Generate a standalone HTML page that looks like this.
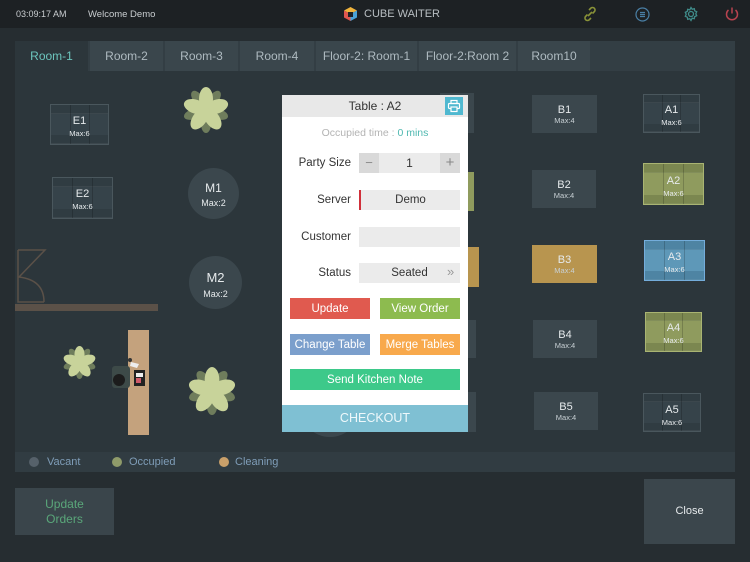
<!DOCTYPE html>
<html><head><meta charset="utf-8"><style>
*{margin:0;padding:0;box-sizing:border-box}
body{width:750px;height:562px;overflow:hidden;background:#262d31;font-family:"Liberation Sans",sans-serif;position:relative;color:#fff}
.a{position:absolute}
.top{left:0;top:0;width:750px;height:28px;background:#1d2124}
.tab{top:41px;height:30px;background:#3a464c;color:#aebac0;font-size:12px;text-align:center;line-height:30px}
.t4{background:#3b474d;color:#e6eaec;text-align:center;font-size:11px}
.t4 b{display:block;font-weight:normal;font-size:11px;margin-top:9px}
.t4 i{display:block;font-style:normal;font-size:7.5px;color:#c8d0d4}
.t6{border:1px solid #4a575d;text-align:center;font-size:11px;color:#e6eaec}
.t6 .s{position:absolute;left:0;right:0;height:22%;border-bottom:1px solid rgba(255,255,255,.06)}
.t6 .c{position:absolute;top:0;bottom:0;width:1px;background:rgba(0,0,0,.18)}
.circ{border-radius:50%;background:#3b474d;text-align:center;color:#e6eaec;font-size:12px}
.lbl{color:#333;font-size:11.5px;text-align:right;width:70px;left:281px}
.fld{background:#ebebeb;left:359px;width:101px;height:20px;color:#333;font-size:11.5px;text-align:center;line-height:21px}
.btn{height:21px;color:#fff;font-size:11.5px;text-align:center;line-height:22px}
</style></head><body>
<div class="a top"></div>
<div class="a" style="left:16px;top:9px;font-size:9px;color:#c9cdd0">03:09:17 AM</div>
<div class="a" style="left:88px;top:9px;font-size:9.5px;color:#c9cdd0">Welcome Demo</div>
<svg class="a" style="left:343px;top:6px" width="15" height="16" viewBox="0 0 15 16"><path d="M7.5 1 L14 4.5 L7.5 8 L1 4.5Z" fill="#f0b43c"/><path d="M1 4.5 L7.5 8 L7.5 15 L1 11.5Z" fill="#e0564f"/><path d="M14 4.5 L7.5 8 L7.5 15 L14 11.5Z" fill="#4aa3d8"/><rect x="5" y="6" width="5" height="5" fill="#1d2124"/></svg>
<div class="a" style="left:364px;top:8px;font-size:11px;color:#b8bec2">CUBE WAITER</div>
<svg class="a" style="left:582px;top:6px" width="16" height="16" viewBox="0 0 16 16" fill="none" stroke="#8a9338" stroke-width="1.6"><path d="M7 4l2-2a2.5 2.5 0 013.5 3.5l-2 2"/><path d="M9 12l-2 2a2.5 2.5 0 01-3.5-3.5l2-2"/><path d="M6 10l4-4"/></svg>
<svg class="a" style="left:635px;top:7px" width="15" height="15" viewBox="0 0 15 15" fill="none" stroke="#4a7fa5" stroke-width="1.2"><circle cx="7.5" cy="7.5" r="6.5"/><path d="M5 5.5h5M5 7.5h5M5 9.5h5"/></svg>
<svg class="a" style="left:683px;top:6px" width="16" height="16" viewBox="0 0 16 16" fill="none" stroke="#3f8c8a" stroke-width="1.3"><circle cx="8" cy="8" r="2.5"/><path d="M8 1.5l1.2 1.8 2.1-.6.4 2.1 2 .9-.9 2 .9 2-2 .9-.4 2.1-2.1-.6L8 14.5l-1.2-1.8-2.1.6-.4-2.1-2-.9.9-2-.9-2 2-.9.4-2.1 2.1.6z"/></svg>
<svg class="a" style="left:724px;top:6px" width="16" height="16" viewBox="0 0 16 16" fill="none" stroke="#b8434f" stroke-width="1.5"><path d="M8 1.5v6"/><path d="M4.5 4a5.5 5.5 0 107 0"/></svg>

<div class="a" style="left:15px;top:41px;width:720px;height:411px;background:#2c363b"></div>
<div class="a" style="left:15px;top:41px;width:720px;height:30px;background:#333e44"></div>
<div class="a tab" style="left:15px;width:73px;background:#2c363b;color:#6cc5bd">Room-1</div>
<div class="a tab" style="left:90px;width:73px">Room-2</div>
<div class="a tab" style="left:165px;width:73px">Room-3</div>
<div class="a tab" style="left:240px;width:74px">Room-4</div>
<div class="a tab" style="left:316px;width:101px">Floor-2: Room-1</div>
<div class="a tab" style="left:419px;width:97px">Floor-2:Room 2</div>
<div class="a tab" style="left:518px;width:72px">Room10</div>

<div class="a t6" style="left:50px;top:104px;width:59px;height:41px;background:#36434a"><div class="s" style="top:0;background:#303c42"></div><div class="s" style="bottom:0;background:#303c42"></div><div class="c" style="left:33%"></div><div class="c" style="left:66%"></div><div class="a" style="left:0;right:0;top:10px">E1<br><span style="font-size:7.5px">Max:6</span></div></div>
<div class="a t6" style="left:52px;top:177px;width:61px;height:42px;background:#36434a"><div class="s" style="top:0;background:#303c42"></div><div class="s" style="bottom:0;background:#303c42"></div><div class="c" style="left:33%"></div><div class="c" style="left:66%"></div><div class="a" style="left:0;right:0;top:10px">E2<br><span style="font-size:7.5px">Max:6</span></div></div>

<div class="a circ" style="left:188px;top:168px;width:51px;height:51px;padding-top:13px">M1<br><span style="font-size:9px">Max:2</span></div>
<div class="a circ" style="left:189px;top:256px;width:53px;height:53px;padding-top:14px;font-size:13px">M2<br><span style="font-size:9px">Max:2</span></div>

<svg class="a" style="left:16px;top:248px" width="32" height="56" viewBox="0 0 32 56" fill="none" stroke="#5b5148" stroke-width="1.5"><path d="M2 2v52h26"/><path d="M2 2h27L3 29Q28 32 28 54"/></svg>
<div class="a" style="left:15px;top:304px;width:143px;height:7px;background:#5b5148"></div>

<div class="a" style="left:128px;top:330px;width:21px;height:105px;background:#c4a27d"></div>
<svg class="a" style="left:110px;top:356px" width="44" height="45" viewBox="0 0 44 45"><rect x="2" y="10" width="18" height="22" rx="3" fill="#3d4a48"/><circle cx="9" cy="24" r="6" fill="#1c1c1c"/><rect x="24" y="14" width="11" height="16" fill="#222"/><rect x="26" y="17" width="7" height="4" fill="#eee"/><rect x="26" y="22" width="5" height="5" fill="#d05a6a"/><path d="M21 6l8 2-2 4-7-2z" fill="#eee"/><circle cx="20" cy="4" r="2" fill="#333"/></svg>

<svg width="0" height="0" style="position:absolute"><defs><g id="pl"><g fill="#6f7d5c"><ellipse cx="0" cy="-14" rx="5" ry="9" transform="rotate(36)"/><ellipse cx="0" cy="-14" rx="5" ry="9" transform="rotate(108)"/><ellipse cx="0" cy="-14" rx="5" ry="9" transform="rotate(180)"/><ellipse cx="0" cy="-14" rx="5" ry="9" transform="rotate(252)"/><ellipse cx="0" cy="-14" rx="5" ry="9" transform="rotate(324)"/></g><g fill="#c8d39a"><ellipse cx="0" cy="-11" rx="7" ry="12"/><ellipse cx="0" cy="-11" rx="7" ry="12" transform="rotate(72)"/><ellipse cx="0" cy="-11" rx="7" ry="12" transform="rotate(144)"/><ellipse cx="0" cy="-11" rx="7" ry="12" transform="rotate(216)"/><ellipse cx="0" cy="-11" rx="7" ry="12" transform="rotate(288)"/></g></g></defs></svg>
<svg class="a" style="left:183px;top:87px" width="46" height="46" viewBox="-23 -23 46 46"><use href="#pl"/></svg>
<svg class="a" style="left:188px;top:367px" width="48" height="48" viewBox="-23 -23 46 46"><use href="#pl"/></svg>
<svg class="a" style="left:63px;top:346px" width="33" height="33" viewBox="-23 -23 46 46"><use href="#pl"/></svg>
<div class="a circ" style="left:300px;top:405px;width:60px;height:32px;border-radius:0 0 30px 30px"></div>

<div class="a" style="left:440px;top:93px;width:34px;height:40px;background:#3b474d"></div>
<div class="a" style="left:440px;top:172px;width:34px;height:39px;background:#8f9b5e"></div>
<div class="a" style="left:440px;top:247px;width:39px;height:40px;background:#b8954f"></div>
<div class="a" style="left:440px;top:320px;width:36px;height:38px;background:#3b474d"></div>
<div class="a" style="left:440px;top:392px;width:36px;height:40px;background:#3b474d"></div>

<div class="a t4" style="left:532px;top:95px;width:65px;height:38px"><b>B1</b><i>Max:4</i></div>
<div class="a t4" style="left:532px;top:170px;width:64px;height:38px"><b>B2</b><i>Max:4</i></div>
<div class="a t4" style="left:532px;top:245px;width:65px;height:38px;background:#b8954f"><b>B3</b><i>Max:4</i></div>
<div class="a t4" style="left:533px;top:320px;width:64px;height:38px"><b>B4</b><i>Max:4</i></div>
<div class="a t4" style="left:534px;top:392px;width:64px;height:38px"><b>B5</b><i>Max:4</i></div>

<div class="a t6" style="left:643px;top:94px;width:57px;height:39px;background:#36434a"><div class="s" style="top:0;background:#303c42"></div><div class="s" style="bottom:0;background:#303c42"></div><div class="c" style="left:33%"></div><div class="c" style="left:66%"></div><div class="a" style="left:0;right:0;top:9px">A1<br><span style="font-size:7.5px">Max:6</span></div></div>
<div class="a t6" style="left:643px;top:163px;width:61px;height:42px;background:#8f9b5e;border-color:#a9b472"><div class="s" style="top:0;background:#7b8750"></div><div class="s" style="bottom:0;background:#7b8750"></div><div class="c" style="left:33%"></div><div class="c" style="left:66%"></div><div class="a" style="left:0;right:0;top:11px">A2<br><span style="font-size:7.5px">Max:6</span></div></div>
<div class="a t6" style="left:644px;top:240px;width:61px;height:41px;background:#5e98b8;border-color:#74addb"><div class="s" style="top:0;background:#4e84a3"></div><div class="s" style="bottom:0;background:#4e84a3"></div><div class="c" style="left:33%"></div><div class="c" style="left:66%"></div><div class="a" style="left:0;right:0;top:10px">A3<br><span style="font-size:7.5px">Max:6</span></div></div>
<div class="a t6" style="left:645px;top:312px;width:57px;height:40px;background:#8f9b5e;border-color:#a9b472"><div class="s" style="top:0;background:#7b8750"></div><div class="s" style="bottom:0;background:#7b8750"></div><div class="c" style="left:33%"></div><div class="c" style="left:66%"></div><div class="a" style="left:0;right:0;top:9px">A4<br><span style="font-size:7.5px">Max:6</span></div></div>
<div class="a t6" style="left:643px;top:393px;width:58px;height:39px;background:#36434a"><div class="s" style="top:0;background:#303c42"></div><div class="s" style="bottom:0;background:#303c42"></div><div class="c" style="left:33%"></div><div class="c" style="left:66%"></div><div class="a" style="left:0;right:0;top:10px">A5<br><span style="font-size:7.5px">Max:6</span></div></div>

<div class="a" style="left:15px;top:452px;width:720px;height:20px;background:#313c42"></div>
<div class="a" style="left:29px;top:457px;width:10px;height:10px;border-radius:50%;background:#56616a"></div>
<div class="a" style="left:47px;top:456px;font-size:11px;color:#7f9db8">Vacant</div>
<div class="a" style="left:112px;top:457px;width:10px;height:10px;border-radius:50%;background:#8f9b6a"></div>
<div class="a" style="left:129px;top:456px;font-size:11px;color:#7f9db8">Occupied</div>
<div class="a" style="left:219px;top:457px;width:10px;height:10px;border-radius:50%;background:#c9a06a"></div>
<div class="a" style="left:235px;top:456px;font-size:11px;color:#7f9db8">Cleaning</div>

<div class="a" style="left:15px;top:488px;width:99px;height:47px;background:#3a454b;color:#5aa77a;font-size:12px;text-align:center;padding-top:9px;line-height:15px">Update<br>Orders</div>
<div class="a" style="left:644px;top:479px;width:91px;height:65px;background:#3b464c;color:#e6eaec;font-size:11px;text-align:center;line-height:65px">Close</div>

<div class="a" style="left:282px;top:95px;width:186px;height:337px;background:#fff"></div>
<div class="a" style="left:282px;top:95px;width:186px;height:22px;background:#e8e8e8;color:#333;font-size:12px;text-align:center;line-height:22px">Table : A2</div>
<div class="a" style="left:445px;top:97px;width:18px;height:18px;background:#4fb8d0"></div>
<svg class="a" style="left:447px;top:99px" width="14" height="14" viewBox="0 0 14 14" fill="none" stroke="#fff" stroke-width="1.2"><rect x="4" y="1.5" width="6" height="3"/><rect x="1.5" y="4.5" width="11" height="5" rx="1"/><rect x="4" y="8" width="6" height="4.5" fill="#4fb8d0"/></svg>
<div class="a" style="left:282px;top:127px;width:186px;text-align:center;font-size:10.5px;color:#b3b3b3">Occupied time : <span style="color:#4fb8b0">0 mins</span></div>
<div class="a lbl" style="top:157px">Party Size</div>
<div class="a fld" style="top:153px;font-size:12px">1</div>
<div class="a" style="left:359px;top:153px;width:20px;height:20px;background:#d9d9d9;color:#888;text-align:center;line-height:20px;font-size:13px">−</div>
<div class="a" style="left:440px;top:153px;width:20px;height:20px;background:#d9d9d9;color:#888;text-align:center;line-height:19px;font-size:15px">+</div>
<div class="a lbl" style="top:194px">Server</div>
<div class="a fld" style="top:190px;border-left:2px solid #d0303a">Demo</div>
<div class="a lbl" style="top:231px">Customer</div>
<div class="a fld" style="top:227px"></div>
<div class="a lbl" style="top:267px">Status</div>
<div class="a fld" style="top:263px">Seated</div>
<div class="a" style="left:447px;top:264px;color:#999;font-size:13px">»</div>
<div class="a btn" style="left:290px;top:298px;width:80px;background:#e05a4f">Update</div>
<div class="a btn" style="left:380px;top:298px;width:80px;background:#8dbb4f">View Order</div>
<div class="a btn" style="left:290px;top:334px;width:80px;background:#7b9fcc">Change Table</div>
<div class="a btn" style="left:380px;top:334px;width:80px;background:#f8a94c">Merge Tables</div>
<div class="a btn" style="left:290px;top:369px;width:170px;background:#3dc98a">Send Kitchen Note</div>
<div class="a" style="left:282px;top:405px;width:186px;height:27px;background:#7fc0d3;color:#eef8fb;font-size:12.5px;text-align:center;line-height:27px">CHECKOUT</div>
</body></html>
